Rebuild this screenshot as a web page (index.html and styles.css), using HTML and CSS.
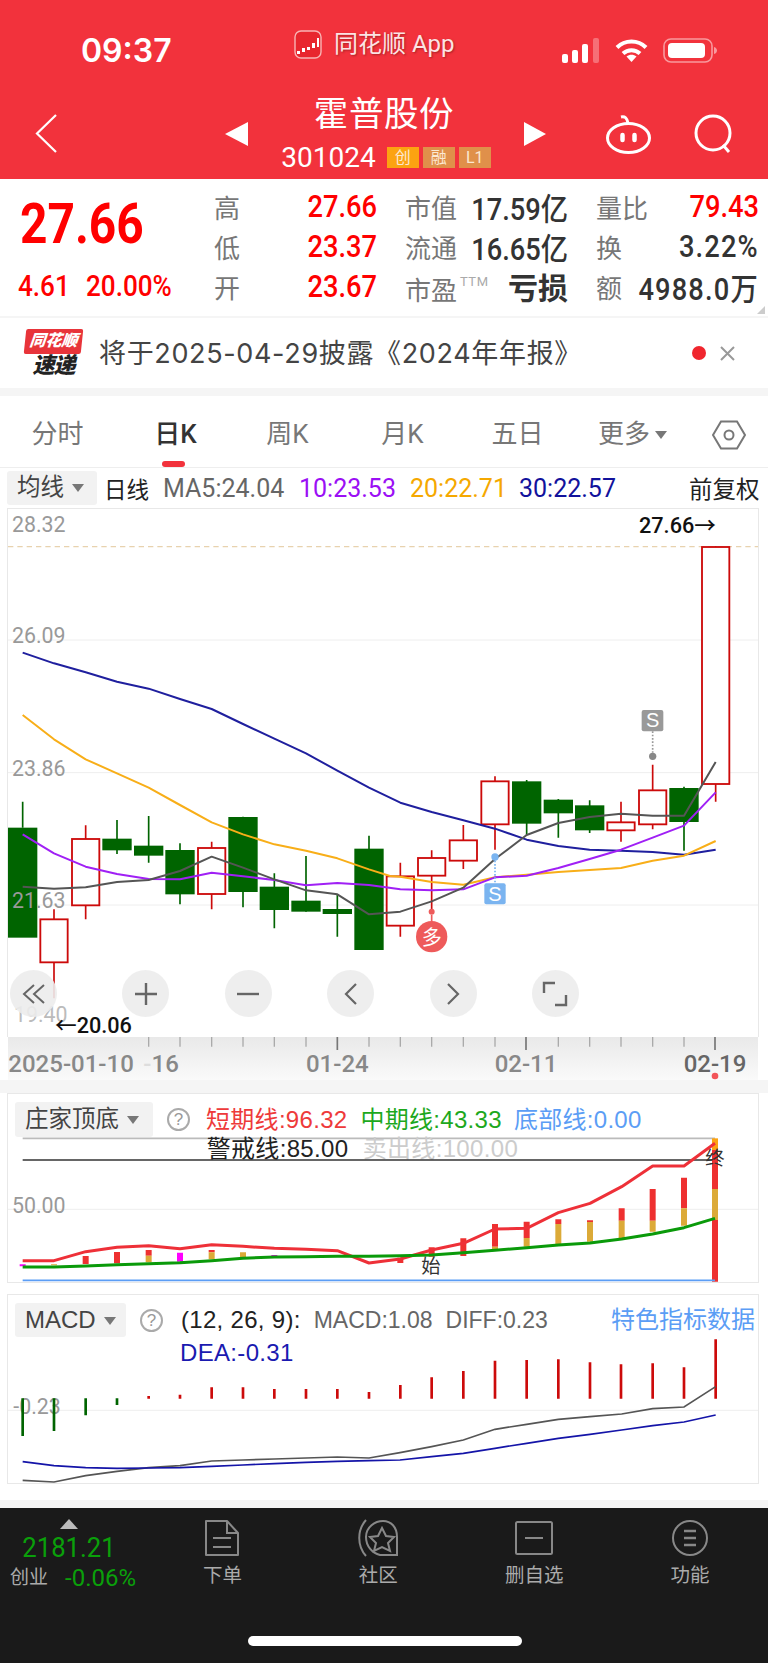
FILE: index.html
```html
<!DOCTYPE html>
<html lang="zh">
<head>
<meta charset="utf-8">
<title>霍普股份</title>
<link rel="stylesheet" href="styles.css">
</head>
<body>
<div class="page">
  <header class="top">
    <div class="status">
      <div class="time">09:37</div>
      <div class="app">
        <svg class="app-logo" viewBox="0 0 28 29"><rect x="1" y="1" width="26" height="27" rx="6" fill="#e8262e" stroke="#f8b4b4" stroke-width="1.4"/><path d="M3 21h3v3H3zM8 18h3v4H8zM13 17h3v3h-3zM18 13h3v5h-3zM23 8h2v9h-2z" fill="#fff"/></svg>
        <span class="app-name">同花顺 App</span>
      </div>
      <div class="sys">
        <svg class="sig" viewBox="0 0 38 25"><rect x="0" y="16" width="6" height="9" rx="2" fill="#fff"/><rect x="10" y="12" width="6" height="13" rx="2" fill="#fff"/><rect x="20" y="6" width="6" height="19" rx="2" fill="#fff"/><rect x="31" y="0" width="6" height="25" rx="2" fill="#fff" opacity=".3"/></svg>
        <svg class="wifi" viewBox="0 0 33 25" fill="none" stroke="#fff" stroke-width="4"><path d="M2 9.5C10 1.5 23 1.5 31 9.5"/><path d="M8 15.5c4.800-4.500 12.200-4.500 17 0"/><path d="M16.500 24l-5-5.500c3-2.500 7-2.500 10 0z" fill="#fff" stroke="none"/></svg>
        <svg class="batt" viewBox="0 0 54 25"><rect x="1" y="1" width="48" height="23" rx="7" fill="none" stroke="#fff" stroke-opacity=".5" stroke-width="1.600"/><rect x="5" y="5" width="37" height="15" rx="4" fill="#fff"/><path d="M51 9c2 .5 3 2 3 3.500s-1 3-3 3.500z" fill="#fff" opacity=".5"/></svg>
      </div>
    </div>
    <div class="nav">
      <svg class="back" viewBox="0 0 22 39" fill="none" stroke="#fff" stroke-width="2.200"><path d="M21 1L2 19.500 21 38"/></svg>
      <span class="tri tri-l"></span>
      <div class="title">
        <div class="name">霍普股份</div>
        <div class="code-row">
          <span class="code">301024</span>
          <span class="badge badge-o">创</span>
          <span class="badge">融</span>
          <span class="badge">L1</span>
        </div>
      </div>
      <span class="tri tri-r"></span>
      <svg class="robot" viewBox="0 0 47 40" fill="none" stroke="#fff" stroke-width="3"><path d="M16 3c4-1 6 1 7 6"/><ellipse cx="23.500" cy="24" rx="21" ry="14.500"/><path d="M17.500 21v5M29.500 21v5" stroke-width="4.500" stroke-linecap="round"/></svg>
      <svg class="search" viewBox="0 0 39 38" fill="none" stroke="#fff" stroke-width="3"><circle cx="19" cy="18" r="17"/><path d="M29 30l6 7"/></svg>
    </div>
  </header>

  <section class="quote">
    <div class="price">
      <div class="big cond-l">27.66</div>
      <div class="chg"><span class="cond-c chg-a">4.61</span><span class="cond-c chg-b">20.00%</span></div>
    </div>
    <div class="stats">
      <div class="cell"><span class="lab">高</span><span class="val up cond-r">27.66</span></div>
      <div class="cell"><span class="lab">市值</span><span class="val cond-r">17.59亿</span></div>
      <div class="cell"><span class="lab">量比</span><span class="val up cond-r">79.43</span></div>
      <div class="cell"><span class="lab">低</span><span class="val up cond-r">23.37</span></div>
      <div class="cell"><span class="lab">流通</span><span class="val cond-r">16.65亿</span></div>
      <div class="cell"><span class="lab">换</span><span class="val val-w cond-r">3.22%</span></div>
      <div class="cell"><span class="lab">开</span><span class="val up cond-r">23.67</span></div>
      <div class="cell"><span class="lab lab-low">市盈<sup class="ttm">TTM</sup></span><span class="val val-b">亏损</span></div>
      <div class="cell"><span class="lab">额</span><span class="val val-w cond-r">4988.0万</span></div>
    </div>
    <span class="corner"></span>
  </section>

  <section class="notice">
    <div class="flash">
      <div class="flash-top">同花顺</div>
      <div class="flash-bot">速递</div>
    </div>
    <div class="notice-text">将于2025-04-29披露《2024年年报》</div>
    <span class="dot"></span>
    <svg class="close" viewBox="0 0 15 15" fill="none" stroke="#999" stroke-width="2"><path d="M1 1l13 13M14 1L1 14"/></svg>
  </section>

  <section class="kline">
    <nav class="tabs">
      <span class="tab">分时</span>
      <span class="tab tab-on">日K</span>
      <span class="tab">周K</span>
      <span class="tab">月K</span>
      <span class="tab">五日</span>
      <span class="tab">更多<i class="caret caret-more"></i></span>
      <svg class="hex" viewBox="0 0 34 30" fill="none" stroke="#777" stroke-width="2"><path d="M9 1.500h16L33 15l-8 13.500H9L1 15z"/><circle cx="17" cy="15" r="4.500"/></svg>
    </nav>
    <div class="ma-row">
      <span class="pick pick-ma">均线<i class="caret"></i></span>
      <span class="ma-day">日线</span>
      <span class="ma ma5">MA5:24.04</span>
      <span class="ma ma10">10:23.53</span>
      <span class="ma ma20">20:22.71</span>
      <span class="ma ma30">30:22.57</span>
      <span class="ma-fq">前复权</span>
    </div>
    <div class="chart">
      <svg class="chart-svg" viewBox="24 -273 2250 1584">
        <path class="grid" d="M24 120H2274M24 518H2274M24 915H2274"/>
        <path class="dash" d="M24 -160H2274"/>
        <path class="wick-g" d="M68 605V683M351 660V762M446 648V788M540 730V913M729 650V922M823 820V985M918 768V935M1012 882V1010M1107 707V1050M1580 540V705M1675 597V713M1769 601V699M2052 560V752"/>
        <path class="wick-r" d="M162 928V1195M257 676V958M635 725V928M1201 788V1010M1295 751V932M1390 675V807M1485 529V749M1863 605V725M1958 494V688M2147 -161V605"/>
        <g class="body-g">
          <rect x="24" y="683" width="88" height="330"/>
          <rect x="307" y="716" width="88" height="35"/>
          <rect x="402" y="737" width="88" height="30"/>
          <rect x="496" y="750" width="88" height="133"/>
          <rect x="685" y="651" width="88" height="225"/>
          <rect x="779" y="860" width="88" height="70"/>
          <rect x="874" y="902" width="88" height="33"/>
          <rect x="968" y="927" width="88" height="15"/>
          <rect x="1063" y="746" width="88" height="304"/>
          <rect x="1536" y="544" width="88" height="127"/>
          <rect x="1631" y="599" width="88" height="41"/>
          <rect x="1725" y="616" width="88" height="75"/>
          <rect x="2008" y="564" width="88" height="102"/>
        </g>
        <g class="body-r">
          <rect x="121" y="958" width="82" height="129"/>
          <rect x="216" y="717" width="82" height="199"/>
          <rect x="594" y="744" width="82" height="138"/>
          <rect x="1160" y="829" width="82" height="148"/>
          <rect x="1254" y="774" width="82" height="53"/>
          <rect x="1349" y="721" width="82" height="61"/>
          <rect x="1444" y="544" width="82" height="129"/>
          <rect x="1822" y="667" width="82" height="24"/>
          <rect x="1917" y="571" width="82" height="102"/>
          <rect x="2106" y="-159" width="82" height="711"/>
        </g>
        <polyline class="l l-blue" points="68,158 162,190 257,217 351,245 446,266 540,297 635,327 729,372 823,416 918,460 1012,512 1107,563 1201,608 1295,636 1390,661 1485,686 1580,719 1675,738 1769,749 1863,752 1958,756 2052,764 2147,749"/>
        <polyline class="l l-orange" points="68,345 162,418 257,478 351,520 446,563 540,615 635,667 729,703 823,733 918,752 1012,775 1107,808 1170,828 1201,830 1295,846 1390,854 1485,832 1580,824 1675,816 1769,810 1863,804 1958,782 2052,767 2147,723"/>
        <polyline class="l l-purple" points="68,703 162,760 257,800 351,822 446,837 540,838 635,818 729,829 823,840 918,856 1012,849 1107,855 1201,868 1295,871 1390,868 1485,832 1580,827 1675,804 1769,777 1863,749 1958,713 2052,677 2147,577"/>
        <polyline class="l l-gray" points="68,860 162,866 257,862 351,846 446,840 540,813 635,770 729,803 823,838 918,871 1012,883 1107,943 1201,935 1295,904 1390,863 1485,777 1580,705 1675,669 1769,651 1863,641 1958,647 2052,647 2147,486"/>
        <text class="axis-lab" x="36" y="-204">28.32</text>
        <text class="axis-lab" x="36" y="130">26.09</text>
        <text class="axis-lab" x="36" y="527">23.86</text>
        <text class="axis-lab" x="36" y="925">21.63</text>
        <text class="axis-lab axis-faded" x="42" y="1265">19.40</text>
        <circle cx="1295" cy="935" r="9" fill="#ee5a5a"/>
        <circle cx="1295" cy="1010" r="47" fill="#ee5a5a"/>
        <path d="M1295 945V966" stroke="#ee5a5a" stroke-width="5"/>
        <text class="mark-duo" x="1295" y="1034">多</text>
        <circle cx="1485" cy="771" r="11" fill="#7ab4f0"/>
        <path d="M1485 782V850" stroke="#7ab4f0" stroke-width="5" stroke-dasharray="5 5"/>
        <rect x="1453" y="850" width="64" height="63" rx="6" fill="#7ab4f0"/>
        <text class="mark-s" x="1485" y="902">S</text>
        <circle cx="1958" cy="469" r="11" fill="#888"/>
        <path d="M1958 394V458" stroke="#999" stroke-width="5" stroke-dasharray="5 5"/>
        <rect x="1925" y="330" width="65" height="64" rx="6" fill="#999"/>
        <text class="mark-s" x="1958" y="382">S</text>
        <text class="px-lab" x="1917" y="-200">27.66→</text>
        <text class="px-lab" x="165" y="1300">←20.06</text>
      </svg>
      <div class="zoom-btns">
        <span class="zb zb-first"><svg viewBox="0 0 24 20" fill="none" stroke="#666" stroke-width="2"><path d="M12 1L2 10l10 9M22 1L12 10l10 9"/></svg></span>
        <span class="zb"><svg viewBox="0 0 24 24" fill="none" stroke="#666" stroke-width="2.400"><path d="M1 12h22M12 1v22"/></svg></span>
        <span class="zb"><svg viewBox="0 0 24 24" fill="none" stroke="#666" stroke-width="2.400"><path d="M1 12h22"/></svg></span>
        <span class="zb"><svg viewBox="0 0 24 24" fill="none" stroke="#666" stroke-width="2.200"><path d="M17 2L7 12l10 10"/></svg></span>
        <span class="zb"><svg viewBox="0 0 24 24" fill="none" stroke="#666" stroke-width="2.200"><path d="M7 2l10 10L7 22"/></svg></span>
        <span class="zb"><svg viewBox="0 0 24 24" fill="none" stroke="#666" stroke-width="2.400"><path d="M12 1H1v10M12 23h11V13"/></svg></span>
      </div>
    </div>
    <svg class="axis" viewBox="24 1311 2250 129">
      <path class="tick" d="M446 1311V1340M540 1311V1340M635 1311V1340M729 1311V1340M823 1311V1340M918 1311V1340M1107 1311V1340M1201 1311V1340M1295 1311V1340M1390 1311V1340M1485 1311V1340M1675 1311V1340M1769 1311V1340M1863 1311V1340M1958 1311V1340M2052 1311V1340"/>
      <path class="tick-major" d="M1012 1311V1350M1578 1311V1350M2145 1311V1350"/>
      <text class="date" x="25" y="1415">2025-01-10</text>
      <text class="date date-faded" x="430" y="1415"><tspan class="date-dash">-</tspan><tspan class="date-solid">16</tspan></text>
      <text class="date date-mid" x="1012" y="1415">01-24</text>
      <text class="date date-mid" x="1578" y="1415">02-11</text>
      <text class="date date-mid date-last" x="2145" y="1415">02-19</text>
      <circle cx="2145" cy="1428" r="10" fill="#f2555a"/>
    </svg>
  </section>

  <section class="panels">
    <div class="panel">
      <div class="ind-head">
        <span class="pick pick-ind">庄家顶底<i class="caret"></i></span>
        <span class="help">?</span>
        <span class="ind ind-r">短期线:96.32</span>
        <span class="ind ind-g">中期线:43.33</span>
        <span class="ind ind-b">底部线:0.00</span>
      </div>
      <svg class="ind-svg" viewBox="24 171 2250 435">
        <path class="grid" d="M24 388H2274"/>
        <path d="M68 175H2145" stroke="#bbb" stroke-width="5"/>
        <text class="ind-text" x="620" y="232">警戒线:85.00</text>
        <text class="ind-text ind-text-light" x="1088" y="232">卖出线:100.00</text>
        <path d="M68 240H2145" stroke="#333" stroke-width="5"/>
        <text class="axis-lab" x="36" y="398">50.00</text>
        <path class="bar-red" d="M257 528V552M351 516V550M446 510V527M635 510V517M1201 533V549M1295 502V530M1390 475V528M1485 432V500M1580 425V474M1675 418V432M1770 421V426M1865 385V422M1958 327V422M2052 293V385M2145 210V327M2145 420V605"/>
        <path class="bar-gold" d="M162 553V556M446 527V547M635 517V538M729 517V535M1485 500V510M1580 474V500M1675 432V492M1770 426V485M1865 422V475M1958 422V455M2052 385V437M2145 327V420"/>
        <path class="bar-mag" d="M68 553V559M540 518V545M823 525V530"/>
        <path class="bar-orange" d="M2145 175V210"/>
        <path d="M68 601H2145" stroke="#5b9df5" stroke-width="5"/>
        <polyline class="thick t-red" points="68,542 162,542 257,515 351,502 446,497 540,506 635,494 729,499 823,505 918,508 1012,512 1107,549 1201,537 1295,510 1390,490 1485,447 1580,445 1675,398 1770,370 1865,320 1958,258 2052,258 2145,190"/>
        <polyline class="thick t-green" points="68,561 162,561 257,558 351,554 446,551 540,548 635,542 729,535 823,531 918,530 1012,529 1107,529 1201,527 1295,525 1390,518 1485,511 1580,503 1675,495 1770,489 1865,477 1958,462 2052,443 2145,415"/>
        <text class="mark-txt" x="1293" y="578">始</text>
        <text class="mark-txt" x="2145" y="256">终</text>
      </svg>
    </div>
    <div class="panel panel-macd">
      <div class="ind-head">
        <span class="pick pick-macd">MACD<i class="caret"></i></span>
        <span class="help help-macd">?</span>
        <span class="ind ind-k">(12, 26, 9):</span>
        <span class="ind ind-d">MACD:1.08</span>
        <span class="ind ind-d">DIFF:0.23</span>
        <span class="ind ind-more">特色指标数据</span>
      </div>
      <svg class="macd-svg" viewBox="24 141 2250 438">
        <text class="dea" x="540" y="212">DEA:-0.31</text>
        <path class="grid" d="M24 361H2274"/>
        <text class="axis-lab" x="40" y="372">-0.23</text>
        <path class="m-g" d="M68 325V438M162 325V423M257 325V376M351 325V345"/>
        <path class="m-r" d="M446 318V326M540 314V326M635 292V326M729 292V326M823 297V326M918 297V326M1012 297V326M1107 306V326M1201 285V326M1295 262V326M1390 243V326M1485 212V326M1580 210V326M1675 208V326M1770 217V326M1863 223V326M1958 220V326M2052 232V326M2147 148V326"/>
        <polyline class="l-m l-mg" points="68,571 162,576 257,557 351,544 446,533 540,527 635,513 729,510 823,507 918,504 1012,501 1107,504 1200,488 1295,470 1390,450 1485,418 1580,403 1675,388 1770,380 1865,372 1958,356 2052,351 2147,290"/>
        <polyline class="l-m l-mb" points="68,515 162,527 257,533 351,535 446,534 540,533 635,529 729,525 823,521 918,517 1012,514 1107,512 1200,510 1295,500 1390,490 1485,475 1580,460 1675,445 1770,433 1865,420 1958,407 2052,396 2147,375"/>
      </svg>
    </div>
  </section>

  <footer class="foot">
    <div class="index">
      <span class="index-tri"></span>
      <div class="index-num">2181.21</div>
      <div class="index-row"><span class="index-name">创业</span><span class="index-chg">-0.06%</span></div>
    </div>
    <div class="fitem">
      <svg class="ficon" viewBox="0 0 40 38" fill="none" stroke="#888" stroke-width="2"><path d="M4 2h21l11 12v22H4z" stroke-linejoin="round"/><path d="M25 2v12h11M11 19h18M11 28h18"/></svg>
      <span>下单</span>
    </div>
    <div class="fitem">
      <svg class="ficon" viewBox="0 0 40 38" fill="none" stroke="#888" stroke-width="2"><path d="M8 1C-1 11-1 27 8 37"/><path d="M39 36V18C39 8 33 2 25 2S8 8 8 18c0 9 6 16 14 18z"/><path d="M24 9l4 8 8 1-6 6 2 8-8-4-8 4 2-8-6-6 8-1z"/></svg>
      <span>社区</span>
    </div>
    <div class="fitem">
      <svg class="ficon" viewBox="0 0 40 38" fill="none" stroke="#888" stroke-width="2"><rect x="2" y="3" width="36" height="32" rx="1.500"/><path d="M11 19h18"/></svg>
      <span>删自选</span>
    </div>
    <div class="fitem">
      <svg class="ficon" viewBox="0 0 40 38" fill="none" stroke="#888" stroke-width="2"><circle cx="20" cy="19" r="17"/><path d="M14 12h12M14 19h12M14 26h12" stroke-width="2.400"/></svg>
      <span>功能</span>
    </div>
    <div class="homebar"></div>
  </footer>
</div>
</body>
</html>
```
FILE: styles.css
```css
* { box-sizing: border-box; }
html, body { margin: 0; padding: 0; }
body {
  width: 768px;
  height: 1663px;
  overflow: hidden;
  background: #fff;
  font-family: Roboto, "Noto Sans CJK SC", sans-serif;
}
.page { width: 768px; height: 1663px; display: flex; flex-direction: column; background: #f5f5f5; }
svg { display: block; overflow: visible; }

/* header */
.top { height: 179px; background: #f2323c; color: #fff; padding-top: 30px; flex: none; }
.status { display: flex; align-items: flex-start; height: 62px; }
.time { width: 294px; padding: 3px 0 0 81px; font: 600 32px/36px Inter, sans-serif; }
.app { display: flex; align-items: center; gap: 12px; width: 268px; }
.app-logo { width: 28px; height: 29px; }
.app-name { font-size: 24px; line-height: 29px; color: #fbe4e4; text-shadow: 1px 1px 2px rgba(110, 20, 20, .55); }
.sys { display: flex; gap: 15px; padding-top: 8px; }
.sig { width: 38px; height: 25px; }
.wifi { width: 33px; height: 25px; }
.batt { width: 54px; height: 25px; }

.nav { display: flex; align-items: center; padding-left: 35px; height: 78px; }
.back { width: 22px; height: 39px; margin-right: 168px; margin-top: 5px; }
.tri { width: 0; height: 0; border-style: solid; border-color: transparent; border-width: 12.5px 0; margin-top: 5px; flex: none; }
.tri-l { border-right: 23px solid #fff; }
.tri-r { border-left: 22px solid #fff; }
.title { width: 276px; text-align: center; }
.name { font-size: 34.500px; line-height: 40px; letter-spacing: .6px; margin-bottom: 13px; margin-right: 4px; }
.code-row { display: flex; justify-content: center; align-items: center; gap: 4px; height: 22px; }
.code { font-size: 28px; line-height: 22px; margin-right: 7px; }
.badge { width: 32px; height: 21px; background: #e0904a; color: #fbe8d2; font-size: 16px; line-height: 21px; text-align: center; }
.badge-o { background: #fca311; }
.robot { width: 47px; height: 40px; margin-left: 59px; margin-top: 5px; }
.search { width: 39px; height: 38px; margin-left: 42px; margin-top: 5px; }

/* quote */
.quote { position: relative; height: 137px; background: #fff; display: flex; flex: none; padding-top: 7px; }
.price { width: 214px; padding-left: 20px; color: #f00; }
.big { font-size: 55px; line-height: 60px; font-weight: 700; margin-top: 8px; }
.chg { display: flex; margin: 14px 0 0 -2px; font-size: 29px; line-height: 36px; font-weight: 500; }
.chg-a { width: 68px; }
.cond-l { display: block; transform: scaleX(.87); transform-origin: left center; }
.cond-c { display: block; transform: scaleX(.9); transform-origin: left center; }
.cond-r { display: inline-block; transform: scaleX(.88); transform-origin: right center; }
.stats { flex: 1; display: grid; grid-template-columns: repeat(3, 163px); grid-auto-rows: 40px; column-gap: 28px; }
.cell { display: flex; justify-content: space-between; align-items: center; }
.lab { font-size: 26px; color: #777; white-space: nowrap; }
.lab-low { padding-top: 4px; }
.ttm { font-size: 13px; color: #aaa; vertical-align: 14px; line-height: 0; margin-left: 3px; letter-spacing: .5px; }
.val { font-size: 31px; color: #333; font-weight: 500; white-space: nowrap; }
.val.up { color: #f00; }
.val-w { letter-spacing: 1.300px; }
.val-b { font-weight: 700; font-size: 30px; }
.corner { position: absolute; right: 3px; bottom: 2px; width: 0; height: 0; border-style: solid; border-width: 0 0 8px 8px; border-color: transparent transparent #ccc transparent; }

/* notice */
.notice { margin-top: 2px; height: 70px; background: #fff; display: flex; align-items: center; flex: none; padding-left: 25px; }
.flash { width: 57px; margin-right: 17px; }
.flash-top { height: 25px; background: #e8343a; border-radius: 2px; color: #fff; font-size: 16px; line-height: 24px; font-weight: 900; font-style: italic; text-align: center; transform: skewX(-6deg); white-space: nowrap; }
.flash-bot { color: #222; font-size: 22px; line-height: 24px; font-weight: 900; font-style: italic; text-align: center; letter-spacing: -1px; }
.notice-text { width: 594px; padding-top: 1px; font: 27px/36px Inter, "Noto Sans CJK SC", sans-serif; letter-spacing: .65px; color: #444; white-space: nowrap; }
.dot { width: 14px; height: 14px; border-radius: 50%; background: #f0262e; margin-left: -1px; }
.close { width: 15px; height: 15px; margin-left: 14px; }

/* k-line */
.kline { margin-top: 8px; background: #fff; flex: none; }
.tabs { height: 71px; display: flex; align-items: center; }
.tab { position: relative; width: 115px; height: 71px; line-height: 76px; text-align: center; font-size: 26px; color: #777; white-space: nowrap; }
.tab-on { color: #333; font-weight: 500; padding-left: 6px; }
.tab-on::after { content: ""; position: absolute; left: calc(50% - 11px); bottom: 0; width: 23px; height: 6px; border-radius: 3px; background: #f2323c; }
.caret { display: inline-block; width: 0; height: 0; border-style: solid; border-width: 8px 6px 0; border-color: #777 transparent transparent; margin-left: 8px; vertical-align: 3px; }
.caret-more { margin-left: 5px; vertical-align: 4px; }
.hex { width: 34px; height: 30px; margin: 6px 0 0 22px; }

.ma-row { height: 41px; border-top: 1px solid #eee; display: flex; align-items: center; padding-left: 7px; white-space: nowrap; }
.pick { display: block; background: #f2f2f2; border-radius: 3px; color: #444; }
.pick-ma { width: 90px; height: 34px; padding-left: 10px; font-size: 23.500px; line-height: 33px; }
.ma-day { margin-left: 7px; width: 59px; font-size: 22.500px; color: #222; }
.ma { font-size: 25px; }
.ma5 { width: 136px; color: #666; }
.ma10 { width: 111px; color: #9b0ff5; }
.ma20 { width: 109px; color: #f5a800; }
.ma30 { width: 170px; color: #12129c; }
.ma-fq { font-size: 23.500px; color: #222; }

.chart { position: relative; margin: 0 9px 0 7px; border: 1px solid #e8e8e8; border-bottom: 0; height: 529px; }
.chart-svg { width: 750px; height: 528px; }
.grid { stroke: #eee; stroke-width: 3; fill: none; }
.dash { stroke: #e8d2ae; stroke-width: 4; stroke-dasharray: 16 12; fill: none; }
.axis-lab { font: 64px Roboto, sans-serif; fill: #999; }
.axis-faded { fill: #bbb; }
.wick-g { stroke: #006400; stroke-width: 5; fill: none; }
.wick-r { stroke: #cc0a0a; stroke-width: 5; fill: none; }
.body-g rect { fill: #006400; }
.body-r rect { fill: #fff; stroke: #cc0a0a; stroke-width: 5.500; }
.l { fill: none; stroke-width: 6; stroke-linejoin: round; }
.l-blue { stroke: #1f1f9e; }
.l-orange { stroke: #f8ae18; }
.l-purple { stroke: #a020f5; }
.l-gray { stroke: #555; }
.mark-duo { font: 60px "Noto Sans CJK SC", sans-serif; fill: #fff; text-anchor: middle; }
.mark-s { font: 60px "Liberation Sans", sans-serif; fill: #fff; text-anchor: middle; }
.px-lab { font: 500 65px Roboto, "Noto Sans CJK SC", sans-serif; fill: #111; }

.zoom-btns { position: absolute; left: 2px; top: 461px; display: flex; gap: 55.400px; }
.zb { width: 47px; height: 47px; border-radius: 50%; background: rgba(236, 236, 236, .9); display: flex; align-items: center; justify-content: center; }
.zb svg { width: 24px; height: 24px; }
.zb-first { margin-right: 10px; }

.axis { margin-left: 8px; width: 750px; height: 43px; background: linear-gradient(#e9e9e9, #fafafa); }
.tick { stroke: #aaa; stroke-width: 4; fill: none; }
.tick-major { stroke: #777; stroke-width: 5; fill: none; }
.date { font: 500 72px Roboto, sans-serif; fill: #888; }
.date-mid { text-anchor: middle; }
.date-last { fill: #666; }
.date-dash { fill: #ddd; }

/* indicator panels */
.panels { margin-top: 13px; background: #fff; flex: none; height: 407px; }
.panel { margin: 0 9px 0 7px; border: 1px solid #e8e8e8; }
.panel-macd { margin-top: 11px; }
.ind-head { display: flex; align-items: center; padding: 8px 0 0 7px; white-space: nowrap; }
.pick-ind { width: 138px; height: 35px; padding-left: 10px; font-size: 23.500px; line-height: 34px; }
.pick-macd { width: 111px; height: 34px; padding-left: 10px; font: 24px/34px "Liberation Sans", sans-serif; }
.help { width: 23px; height: 23px; margin-left: 14px; border: 2px solid #aaa; border-radius: 50%; color: #999; font: 17px/19px "Liberation Sans", sans-serif; text-align: center; }
.help-macd { margin-left: 14px; }
.ind { font: 24px/34px "Liberation Sans", "Noto Sans CJK SC", sans-serif; letter-spacing: .3px; }
.ind-r { margin-left: 16px; color: #ee3a3a; }
.ind-g { margin-left: 13px; color: #1da81d; }
.ind-b { margin-left: 12px; color: #5b9df5; }
.ind-k { margin-left: 18px; color: #222; }
.ind-d { margin-left: 13px; color: #666; font-size: 23px; letter-spacing: 0; }
.ind-more { margin-left: auto; margin-right: 3px; color: #5b9df5; letter-spacing: 0; }
.ind-svg { width: 750px; height: 145px; }
.macd-svg { width: 750px; height: 146px; }
.ind-text { font: 72px "Liberation Sans", "Noto Sans CJK SC", sans-serif; fill: #222; letter-spacing: 1px; }
.ind-text-light { fill: #ccc; }
.bar-red, .bar-gold, .bar-mag, .bar-orange { stroke-width: 18; fill: none; }
.bar-red { stroke: #ee3030; }
.bar-gold { stroke: #dcaa38; }
.bar-mag { stroke: #ff00ff; }
.bar-orange { stroke: #fca311; }
.thick { fill: none; stroke-width: 9; stroke-linejoin: round; }
.t-red { stroke: #ee3038; }
.t-green { stroke: #0a9a0a; }
.mark-txt { font: 58px "Noto Sans CJK SC", sans-serif; fill: #333; text-anchor: middle; }
.dea { font: 72px "Liberation Sans", sans-serif; fill: #1a1ab0; letter-spacing: 1px; }
.m-g { stroke: #006400; stroke-width: 8; fill: none; }
.m-r { stroke: #cc0a0a; stroke-width: 8; fill: none; }
.l-m { fill: none; stroke-width: 5; }
.l-mg { stroke: #555; }
.l-mb { stroke: #1414a8; }

/* footer */
.foot { position: relative; flex: 1; margin-top: 8px; background: #1a1a1a; display: flex; align-items: flex-start; padding-top: 11px; }
.index { width: 145px; height: 75px; position: relative; text-align: center; }
.index-tri { display: block; width: 0; height: 0; margin: 0 0 0 60px; border-style: solid; border-width: 0 9px 10px; border-color: transparent transparent #bbb; }
.index-num { width: 138px; font-size: 27px; line-height: 30px; color: #0aa00a; margin-top: 4px; transform: scaleX(.95); }
.index-row { display: flex; align-items: center; gap: 17px; padding-left: 10px; margin-top: 3px; }
.index-name { font-size: 19px; line-height: 24px; color: #aaa; }
.index-chg { font-size: 24px; line-height: 24px; color: #0aa00a; }
.fitem { width: 156.500px; display: flex; flex-direction: column; align-items: center; color: #aaa; font-size: 19.500px; line-height: 28px; }
.ficon { width: 40px; height: 38px; margin-bottom: 5px; }
.homebar { position: absolute; left: 248px; top: 128px; width: 274px; height: 10px; border-radius: 5px; background: #fff; }
```
